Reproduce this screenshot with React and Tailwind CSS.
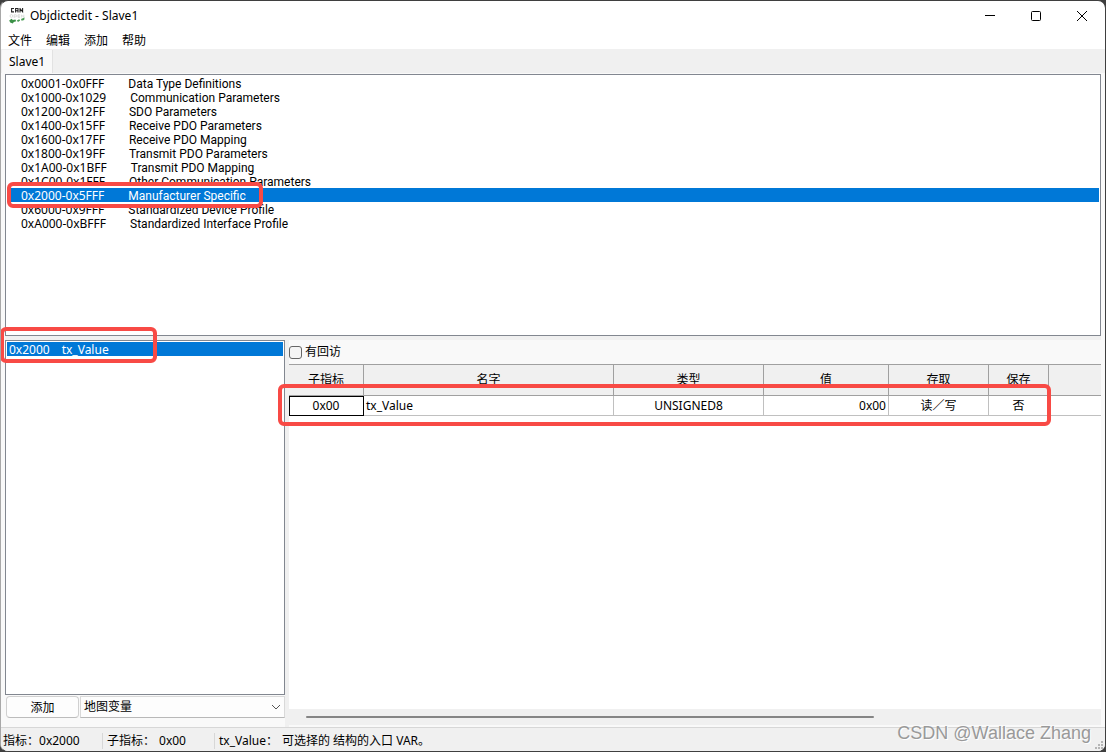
import React, { useState } from 'react';

const SECTIONS = [
    { range: '0x0001-0x0FFF', name: 'Data Type Definitions' },
    { range: '0x1000-0x1029', name: 'Communication Parameters' },
    { range: '0x1200-0x12FF', name: 'SDO Parameters' },
    { range: '0x1400-0x15FF', name: 'Receive PDO Parameters' },
    { range: '0x1600-0x17FF', name: 'Receive PDO Mapping' },
    { range: '0x1800-0x19FF', name: 'Transmit PDO Parameters' },
    { range: '0x1A00-0x1BFF', name: 'Transmit PDO Mapping' },
    { range: '0x1C00-0x1FFF', name: 'Other Communication Parameters' },
    { range: '0x2000-0x5FFF', name: 'Manufacturer Specific' },
    { range: '0x6000-0x9FFF', name: 'Standardized Device Profile' },
    { range: '0xA000-0xBFFF', name: 'Standardized Interface Profile' },
];

const MENUS = ['文件', '编辑', '添加', '帮助'];

const COLUMNS = ['子指标', '名字', '类型', '值', '存取', '保存'];

const AppLogo = () => (
    <svg className="w-4 h-4" viewBox="0 0 16 16" fill="none">
        <g stroke="#222" strokeWidth="1.1">
            <path d="M5 .5H2.6v3.4H5" />
            <path d="M6.6 4.4V.5h2.4v3.9M6.6 2.7H9" />
            <path d="M11 4.4V.6l2.6 3.2V.1" />
        </g>
        <g stroke="#d3d6d3" strokeWidth=".8">
            <circle cx="2.4" cy="8" r="1.4" />
            <path d="M5.2 10V6.8h1.6a1 1 0 010 2H5.2" />
            <path d="M11 6.8H9v2.6h2M9 8.2h2" />
            <path d="M12.4 9.6V6.8l2.4 2.6V6.6" />
        </g>
        <path d="M.2 12.6l2.4-1.8 1.2 1.2 2.6-.4.8 1.6-2.4.8-1 1.6-2.6-1z" fill="#3c9148" />
        <path d="M7.8 12.4l2.4-1.2 1 1.4-2.2 1.4zM12 11l3.6-1.6-.4 2.6-2.6.8z" fill="#4b9c55" />
    </svg>
);

const TitleBar = () => (
    <header className="flex h-[30px] items-center pl-2">
        <AppLogo />
        <h1 className="ml-[5px] flex-1">Objdictedit - Slave1</h1>
        <button type="button" aria-label="最小化" className="flex h-full w-[46px] items-center justify-center">
            <svg className="w-[10px] h-[10px]" viewBox="0 0 10 10" stroke="#000">
                <path d="M0 4.5h10" />
            </svg>
        </button>
        <button type="button" aria-label="最大化" className="flex h-full w-[46px] items-center justify-center">
            <svg className="w-[10px] h-[10px]" viewBox="0 0 10 10" fill="none" stroke="#000">
                <rect x=".5" y=".5" width="9" height="9" rx="1" />
            </svg>
        </button>
        <button type="button" aria-label="关闭" className="flex h-full w-[46px] items-center justify-center">
            <svg className="w-[10px] h-[10px]" viewBox="0 0 10 10" stroke="#000">
                <path d="M0 0l10 10M10 0L0 10" />
            </svg>
        </button>
    </header>
);

// 红色标注框
const Highlight = ({ className }) => (
    <div className={`pointer-events-none absolute z-10 rounded-md border-4 border-[#f84a45] ${className}`} />
);

const SectionList = ({ selected, onSelect }) => (
    <ul className="min-h-0 flex-[258] border border-[#828790] bg-white p-px">
        {SECTIONS.map((s) => (
            <li key={s.range} className={`relative ${selected === s.range ? 'bg-[#0078d7] text-white' : ''}`}>
                <button
                    type="button"
                    onClick={() => onSelect(s.range)}
                    className="flex h-[14px] w-full items-baseline pt-px pl-[14px] text-left leading-[14px] whitespace-nowrap"
                >
                    <span>{s.range}</span>
                    <span className="ml-6 font-['Roboto',sans-serif]">{s.name}</span>
                </button>
                {s.range === '0x2000-0x5FFF' && <Highlight className="left-0 -top-[6px] h-[26px] w-64" />}
            </li>
        ))}
    </ul>
);

const IndexPanel = () => (
    <section className="flex w-[280px] shrink-0 flex-col">
        <ul className="flex-1 border border-[#828790] bg-white p-px">
            <li className="relative bg-[#0078d7] text-white">
                <button type="button" className="flex h-[14px] w-full items-baseline pt-px pl-[2px] text-left leading-[14px]">
                    <span>0x2000</span>
                    <span className="ml-3">tx_Value</span>
                </button>
                <Highlight className="-left-[7px] -top-[15px] h-9 w-[157px]" />
            </li>
        </ul>
        <div className="flex h-8 items-start gap-px pt-px pl-px">
            <button type="button" className="h-[22px] w-[73px] rounded border border-[#d0d0d0] border-b-[#bcbcbc] bg-[#fdfdfd] pt-[2px]">
                添加
            </button>
            <div className="relative h-[22px] flex-1">
                <select
                    aria-label="变量类型"
                    className="h-full w-full appearance-none border border-[#d9d9d9] border-b-[#b8b8b8] bg-[#fdfdfd] pl-[3px]"
                >
                    <option>地图变量</option>
                </select>
                <svg className="pointer-events-none absolute top-[7px] right-1 h-2 w-[10px]" viewBox="0 0 10 8" fill="none" stroke="#555">
                    <path d="M1 2l4 4 4-4" />
                </svg>
            </div>
        </div>
    </section>
);

const ValueTable = () => (
    <div className="relative">
        <table className="w-full table-fixed border-separate border-spacing-0">
            <colgroup>
                <col className="w-[75px]" />
                <col className="w-[250px]" />
                <col className="w-[150px]" />
                <col className="w-[125px]" />
                <col className="w-[100px]" />
                <col className="w-[60px]" />
                <col />
            </colgroup>
            <thead>
                <tr className="h-8 bg-[#f0f0f0]">
                    {COLUMNS.map((c) => (
                        <th key={c} scope="col" className="border-y border-r border-[#a0a0a0] p-0 font-normal">
                            {c}
                        </th>
                    ))}
                    <td className="border-y border-[#a0a0a0] p-0" />
                </tr>
            </thead>
            <tbody>
                <tr className="h-5 text-center leading-[18px]">
                    <td className="border-r border-b border-[#c0c0c0] p-0 outline -outline-offset-1 outline-black">0x00</td>
                    <td className="border-r border-b border-[#c0c0c0] p-0 pl-[2px] text-left">tx_Value</td>
                    <td className="border-r border-b border-[#c0c0c0] p-0">UNSIGNED8</td>
                    <td className="border-r border-b border-[#c0c0c0] p-0 pr-[2px] text-right">0x00</td>
                    <td className="border-r border-b border-[#c0c0c0] p-0">读／写</td>
                    <td className="border-r border-b border-[#c0c0c0] p-0">否</td>
                    <td className="border-b border-[#c0c0c0] p-0" />
                </tr>
            </tbody>
        </table>
        <Highlight className="-left-[11px] top-5 h-[42px] w-[773px]" />
    </div>
);

const DetailPanel = () => {
    const [callback, setCallback] = useState(false);

    return (
        <section className="flex min-w-0 flex-1 flex-col">
            <label className="flex h-6 items-center gap-[3px]">
                <input
                    type="checkbox"
                    checked={callback}
                    onChange={(e) => setCallback(e.target.checked)}
                    className="h-[13px] w-[13px] appearance-none rounded-[3px] border border-[#666] bg-[#f5f5f5] checked:bg-[#0078d7]"
                />
                有回访
            </label>
            <div className="flex-1 bg-white">
                <ValueTable />
            </div>
            <div className="flex h-4 items-center bg-[#f0f0f0] px-[17px]">
                <div className="h-[2px] w-[73%] rounded-full bg-[#858585]" />
            </div>
            <div className="h-[2px]" />
        </section>
    );
};

const StatusBar = () => (
    <footer className="relative flex h-6 shrink-0 items-center border-t border-[#d7d7d7] bg-[#f0f0f0] pt-[2px]">
        <div className="w-[102px] border-r border-[#d7d7d7] pl-[2px]">
            指标：<span>0x2000</span>
        </div>
        <div className="w-28 border-r border-[#d7d7d7] pl-1">
            子指标：<span className="ml-1">0x00</span>
        </div>
        <div className="flex-1 pl-1">
            tx_Value：<span className="ml-1">可选择的 结构的入口 VAR。</span>
        </div>
        <svg className="absolute right-0 bottom-0 h-[11px] w-[11px]" viewBox="0 0 11 11" fill="#b5b5b5">
            <path d="M7 1h2v2H7zM4 4h2v2H4zM7 4h2v2H7zM1 7h2v2H1zM4 7h2v2H4zM7 7h2v2H7z" />
        </svg>
        <span className="absolute right-[14px] bottom-[6px] font-['Liberation_Sans',sans-serif] text-lg leading-6 text-[#999] [text-shadow:1px_1px_0_#fff]">
            CSDN @Wallace Zhang
        </span>
    </footer>
);

const App = () => {
    const [selected, setSelected] = useState('0x2000-0x5FFF');

    return (
        <div className="h-screen bg-[#3f3f3f] font-['Noto_Sans','Noto_Sans_CJK_SC',sans-serif] text-xs text-black">
            <div className="flex h-full flex-col overflow-hidden rounded-lg border border-t-[#3f3f3f] border-r-[#3f3f3f] border-b-[#3f3f3f] border-l-[#a8a8a8] bg-white">
                <TitleBar />
                <nav className="flex h-[18px] items-center gap-[14px] pt-[2px] pl-[7px]">
                    {MENUS.map((m) => (
                        <button key={m} type="button">
                            {m}
                        </button>
                    ))}
                </nav>
                <div className="flex h-6 items-end bg-[#f0f0f0] pl-px" role="tablist">
                    <button
                        type="button"
                        role="tab"
                        aria-selected="true"
                        className="h-[23px] border-r border-[#e2e2e2] bg-[#f9f9f9] px-[7px]"
                    >
                        Slave1
                    </button>
                </div>
                <main className="flex min-h-0 flex-1 flex-col bg-[#f9f9f9] pt-px pr-1 pl-1">
                    <SectionList selected={selected} onSelect={setSelected} />
                    <div className="h-1 bg-[#f0f0f0]" />
                    <div className="flex min-h-0 flex-[387]">
                        <IndexPanel />
                        <div className="w-1 bg-[#f0f0f0]" />
                        <DetailPanel />
                    </div>
                </main>
                <StatusBar />
            </div>
        </div>
    );
};

export default App;
